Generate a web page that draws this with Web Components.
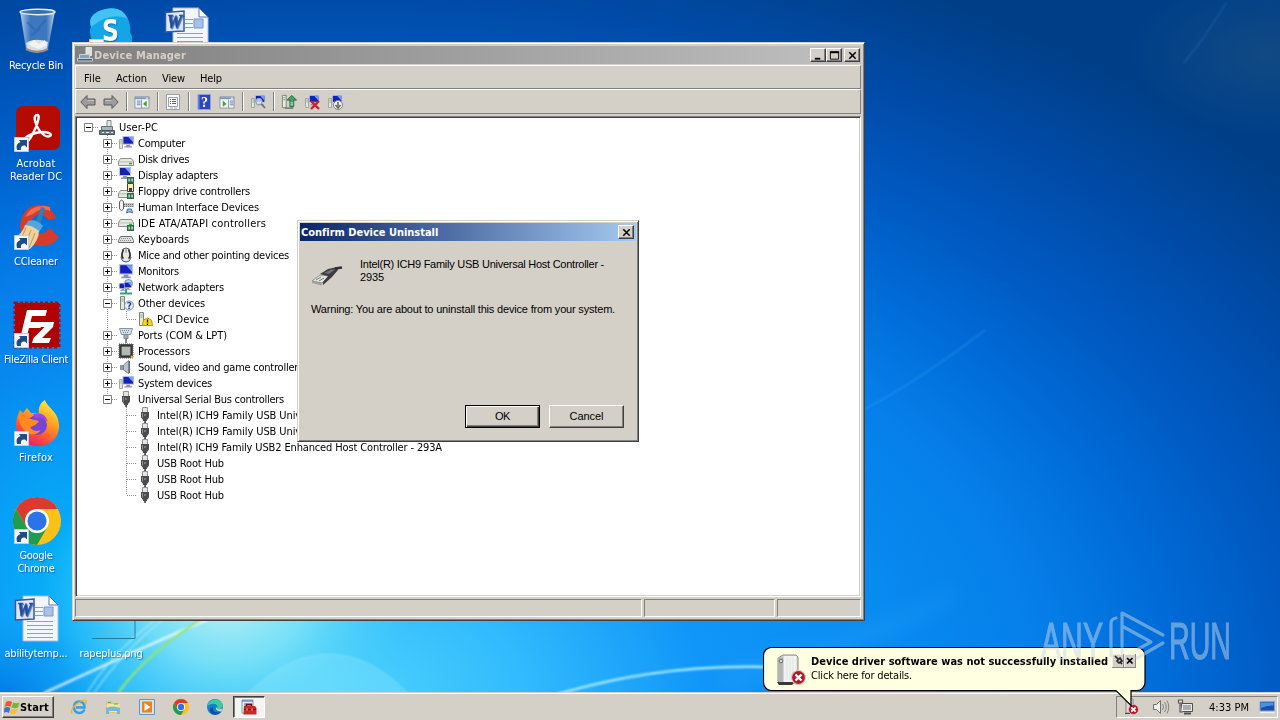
<!DOCTYPE html>
<html lang="en">
<head>
<meta charset="utf-8">
<title>Device Manager</title>
<style>
    html, body { margin: 0; height: 100%; overflow: hidden; }
    body { font: 11px/13px "DejaVu Sans Condensed", "DejaVu Sans", sans-serif; color: #000; }
</style>
</head>
<body>
<desktop-screen>
    <desktop-icon icon="bin" col="1" row="1" width="54">Recycle Bin</desktop-icon>
    <desktop-icon icon="acrobat" col="1" row="2" width="39" shortcut>Acrobat<span slot="second"><fit-text width="52">Reader DC</fit-text></span></desktop-icon>
    <desktop-icon icon="ccleaner" col="1" row="3" width="44" shortcut>CCleaner</desktop-icon>
    <desktop-icon icon="filezilla" col="1" row="4" width="64" shortcut>FileZilla Client</desktop-icon>
    <desktop-icon icon="firefox" col="1" row="5" width="34" shortcut>Firefox</desktop-icon>
    <desktop-icon icon="chrome" col="1" row="6" width="33" shortcut>Google<span slot="second"><fit-text width="37">Chrome</fit-text></span></desktop-icon>
    <desktop-icon icon="word" col="1" row="7" width="63">abilitytemp...</desktop-icon>
    <desktop-icon icon="skype" col="2" row="1" shortcut></desktop-icon>
    <desktop-icon icon="thumb" col="2" row="7" width="63">rapeplus.png</desktop-icon>
    <desktop-icon icon="word" col="3" row="1"></desktop-icon>

    <device-manager slot="window">
        <tree-row level="0" box="-" icon="pc" width="39">User-PC</tree-row>
        <tree-row level="1" box="+" icon="computer" width="47">Computer</tree-row>
        <tree-row level="1" box="+" icon="disk" width="51">Disk drives</tree-row>
        <tree-row level="1" box="+" icon="display" width="80">Display adapters</tree-row>
        <tree-row level="1" box="+" icon="floppy" width="112">Floppy drive controllers</tree-row>
        <tree-row level="1" box="+" icon="hid" width="121">Human Interface Devices</tree-row>
        <tree-row level="1" box="+" icon="ide" width="128">IDE ATA/ATAPI controllers</tree-row>
        <tree-row level="1" box="+" icon="keyboard" width="51">Keyboards</tree-row>
        <tree-row level="1" box="+" icon="mouse" width="151">Mice and other pointing devices</tree-row>
        <tree-row level="1" box="+" icon="monitor" width="41">Monitors</tree-row>
        <tree-row level="1" box="+" icon="network" width="86">Network adapters</tree-row>
        <tree-row level="1" box="-" icon="other" width="67">Other devices</tree-row>
        <tree-row level="2" last icon="warn" width="52">PCI Device</tree-row>
        <tree-row level="1" box="+" icon="port" width="89">Ports (COM &amp; LPT)</tree-row>
        <tree-row level="1" box="+" icon="cpu" width="52">Processors</tree-row>
        <tree-row level="1" box="+" icon="sound" width="165">Sound, video and game controllers</tree-row>
        <tree-row level="1" box="+" icon="computer" width="74">System devices</tree-row>
        <tree-row level="1" last box="-" icon="usb" width="146">Universal Serial Bus controllers</tree-row>
        <tree-row level="2" closed icon="usb" width="278">Intel(R) ICH9 Family USB Universal Host Controller - 2934</tree-row>
        <tree-row level="2" closed icon="usb" width="278">Intel(R) ICH9 Family USB Universal Host Controller - 2935</tree-row>
        <tree-row level="2" closed icon="usb" width="285">Intel(R) ICH9 Family USB2 Enhanced Host Controller - 293A</tree-row>
        <tree-row level="2" closed icon="usb" width="67">USB Root Hub</tree-row>
        <tree-row level="2" closed icon="usb" width="67">USB Root Hub</tree-row>
        <tree-row level="2" closed last icon="usb" width="67">USB Root Hub</tree-row>
    </device-manager>

    <confirm-dialog slot="window">
        <span slot="title"><fit-text width="137">Confirm Device Uninstall</fit-text></span>
        <fit-text slot="device" width="244">Intel(R) ICH9 Family USB Universal Host Controller -</fit-text>
        <fit-text slot="device" width="24">2935</fit-text>
        <fit-text slot="message" width="304">Warning: You are about to uninstall this device from your system.</fit-text>
    </confirm-dialog>

    <task-bar slot="bar"></task-bar>
    <tray-balloon slot="window">
        <fit-text slot="title" width="297">Device driver software was not successfully installed</fit-text>
        <fit-text width="101">Click here for details.</fit-text>
    </tray-balloon>
    <water-mark slot="window"></water-mark>
</desktop-screen>

<script>
const monitorShape = (x, y, s) => `<g transform="translate(${x} ${y}) scale(${s})"><path d="M0 0h12v9H0z" fill="#b8c4e4"/><path d="M1 1h10v7H1z" fill="#1420b8"/><path d="M6 1h5v5.500z" fill="#7c9cf4"/><path d="M4 9h4v1.600h2V12H2v-1.400h2z" fill="#8a94ac"/></g>`;
const towerShape = '<path d="M1.500 4.500h3v9h-3z" fill="#e4e8e0" stroke="#a0a8a0"/><path d="M2.500 6h1.200M2.500 8h1.200" stroke="#58a058"/>';
const driveShape = (y) => `<path d="M2.500 ${y}h11l2 3v4H.5v-4z" fill="#e6e8e4" stroke="#8c908c"/><path d="M1 ${y + 3.4}h14" stroke="#b8bcb8"/><path d="M11 ${y + 5}h3" stroke="#34a040" stroke-width="1.500"/>`;
const chipBadge = '<path d="M9 10h7v6H9z" fill="#2c6844"/><path d="M10.300 11.500h1.800v3h-1.800zM13.200 11.500H15v3h-1.800z" fill="#a8d0b0"/>';
const panelShape = '<path d="M1 3h15v12H1z" fill="#f4f6fa" stroke="#8894a8"/><path d="M1 3.500h15v2H1z" fill="#7c96b8"/><path d="M12.500 4.400h2.500" stroke="#fff"/>';
const redCross = '<circle r="7" fill="#b01c28" stroke="#d8c8c8" stroke-width="1.200"/><path d="M-3-3 3 3M3-3-3 3" stroke="#fff" stroke-width="2.400"/>';
const folds = '<path d="M10 1h26l9 9v36H10z" fill="#f2f7ff" stroke="#a9bbdd"/><path d="M36 1v9h9z" fill="#fff" stroke="#4c74b4"/><path d="M22 12.500h8M22 16.500h8M22 20.500h8M14 26.500h26M14 30.500h26M14 34.500h26M14 38.500h26M14 42.500h26" stroke="#86a0d4"/><path d="M31 12h9v9h-9z" fill="#a9c0e8" stroke="#7696cc"/>';

// name: [viewBox size, svg markup]
const ICONS = {
    bin: [48, '<defs><linearGradient id="g"><stop stop-color="#d8e8f4" stop-opacity=".85"/><stop offset=".3" stop-color="#5c90cc" stop-opacity=".65"/><stop offset=".75" stop-color="#6e9ad0" stop-opacity=".55"/><stop offset="1" stop-color="#dce8f0" stop-opacity=".9"/></linearGradient></defs><path d="M7 4 13 42q11 6 22 0L42 4z" fill="url(#g)"/><path d="M13 36q9-6 22-1l-1 7q-10 6-20 0z" fill="#d8dde2"/><path d="m15 37 6-4 5 4 6-4 2 5-8 4-6-2z" fill="#f4f2ee"/><path d="m14 15 9 9 10-11M18 29l9-7" stroke="#2c62b0" stroke-width="2" fill="none" opacity=".6"/><ellipse cx="24.500" cy="5" rx="17.500" ry="2.700" fill="#3f6ca4" fill-opacity=".7" stroke="#e4eef4" stroke-width="1.400"/><path d="M13 42q11 6 22 0" stroke="#968b88" stroke-width="2.500" fill="none"/>'],
    acrobat: [48, '<rect x="3" y="1" width="44" height="44" rx="7" fill="#b30b00"/><path d="M24.500 10c-5 0-2.500 8 1 14 3 5 8 9 11.500 7s-3-5-12-3.500S10 33 12 36c3 3 8-7 11-14 2-5 4-12 1.500-12z" fill="none" stroke="#fff" stroke-width="2.400"/>'],
    ccleaner: [48, '<path d="M44 15 35 3Q18-2 10 12 2 29 16 39q13 8 26 0l4-5-9-9q-9 10-16 2-6-9 1-14 8-4 13 4z" fill="#d63c2c"/><path d="M37 4Q19 0 12 14l8-3q8-7 17-3z" fill="#ef6c4c"/><path d="m28 4 4 1-6 20-5-1z" fill="#2d7fbd"/><path d="M15 18q8-3 15 5l-4 6q-7-5-14-6z" fill="#51a7dd"/><path d="M12 22q7 0 14 6 0 9-9 18Q6 46 2 34q7-3 10-12z" fill="#efd19a"/><path d="m13 25-6 13m11-11-6 16m10-13-6 15" stroke="#c79954"/>'],
    filezilla: [48, '<path d="M2 2h44v44H2z" fill="#b00000" stroke="#a80c10" stroke-width="3" stroke-dasharray="3 2"/><path d="M14 9h20l-1.500 6H19l-1.500 6H29l-1.500 6H16l-4 15H6z" fill="#fff"/><path d="M25 21h16l-1 5-11 11h9l-2 5H19l1.500-5 11-11h-8z" fill="#fff"/>'],
    firefox: [48, '<defs><linearGradient id="g" x1=".8" y1="0" x2=".3" y2="1"><stop stop-color="#fff44a"/><stop offset=".4" stop-color="#ffa21f"/><stop offset=".75" stop-color="#ff4a40"/><stop offset="1" stop-color="#e02070"/></linearGradient></defs><path d="M32 1c2 8 14 11 14 26 0 12-9 20-21 20S3 38 3 25c0-5 2-10 4-14l3 3 4-5 4 5h8c-1-5 1-10 6-13z" fill="url(#g)"/><circle cx="24" cy="26" r="10" fill="#7844d4"/><path d="M6 13q4 7 12 7l8 2q-3 5-9 6 4 6 11 3-7 8-15 2Q4 25 6 13z" fill="#ff8b1c"/><path d="M20 15q12-3 15 8-7-7-12-3z" fill="#9a48e0"/>'],
    chrome: [48, '<circle cx="24" cy="24" r="24" fill="#fbc116"/><path d="M24 12h20.800A24 24 0 0 0 3.200 12L13.600 30z" fill="#db3b2e"/><path d="M3.200 12 13.600 30 24 36l10.400-6L24 48A24 24 0 0 1 3.200 12z" fill="#249a4c"/><circle cx="24" cy="24" r="12" fill="#fff"/><circle cx="24" cy="24" r="9.600" fill="#2c72e8"/>'],
    word: [48, folds + '<path d="M2.500 5.500 21 4v20L2.500 25z" fill="#dfe8fa" stroke="#305aa8" stroke-width="1.500"/><text x="4" y="21" font-family="Liberation Serif, serif" font-size="18" font-weight="700" font-style="italic" fill="#2a52a0" stroke="#2a52a0" stroke-width=".6" textLength="15" lengthAdjust="spacingAndGlyphs">W</text>'],
    skype: [48, '<path d="M14 3q19-6 26 9 3 7 2 13 5 8-1 15-7 7-16 4Q8 46 3 31q-2-8 0-11Q-1 8 14 3z" fill="#12a5e8"/><path d="M14 3q19-6 26 9-17-8-37 8Q-1 8 14 3z" fill="#42c3f4"/><text x="22.500" y="34" text-anchor="middle" font-family="DejaVu Sans, sans-serif" font-weight="700" font-size="30" fill="#fff" textLength="17" lengthAdjust="spacingAndGlyphs">S</text>'],
    thumb: [48, '<path d="M4 43.500h43V20" fill="none" stroke="#247d98"/><path d="M19 37h7" stroke="#70b8c8"/>'],
    pc: [16, '<path d="M8 1.500h4v7H8z" fill="#e4ece4" stroke="#808880"/><path d="M2.500 7.500h11v4h-11z" fill="#a8b4bc" stroke="#68747c"/><path d="M.5 11.500h15v4H.5z" fill="#6c7c84" stroke="#48545c"/><path d="M3 13.500h2m2 0h3m2 0h2" stroke="#dce8ec"/>'],
    computer: [16, towerShape + monitorShape(4.5, 1, .96)],
    disk: [16, driveShape(7.5)],
    display: [16, monitorShape(1, 0, 1) + chipBadge],
    floppy: [16, driveShape(7.5) + '<path d="M9.500.5h6v8h-6z" fill="#f4eeb0" stroke="#404038"/><path d="M11 5h3v3h-3z" fill="#404038"/>' + chipBadge],
    hid: [16, '<path d="M1.500 3q2-4 4 0v7q-2 3-4 0z" fill="#f0f0f0" stroke="#606060"/><path d="M6 4h10v4H6z" fill="#c0c0c0"/><path d="M6 5.500h10M6 7.500h10" stroke="#707070" stroke-dasharray="1 1"/><path d="m8.500 14 1-4h4l1 4-2-1h-2z" fill="#a4c0dc" stroke="#486c98"/>'],
    ide: [16, driveShape(4.5) + chipBadge],
    keyboard: [16, '<path d="M2.500 5.500h11l2 4v2H.5v-2z" fill="#e0e0e0" stroke="#707070"/><path d="M3 7.500h10M2 9.500h12" stroke="#909090" stroke-dasharray="1 1"/>'],
    mouse: [16, '<path d="M5 2q3-2 6 0l2 9q-1 4-5 4t-5-4z" fill="#e8e8e8" stroke="#585858"/><path d="M5.500 2.500q-3 7 0 9M10.500 2.500q3 7 0 9" stroke="#303030" stroke-width="1.600" fill="none"/><path d="M8 2v4" stroke="#888"/>'],
    monitor: [16, monitorShape(1, 1, 1.18)],
    network: [16, '<circle cx="10.500" cy="4.500" r="4" fill="#b4d4f4" stroke="#6890c8"/>' + monitorShape(1, 4, .65) + monitorShape(6, 3, .65) + '<path d="M8 10v4M2 14.500h12" stroke="#34a078" stroke-width="2"/>'],
    other: [16, '<path d="M2.500 1.500h4v13h-4z" fill="#e6eae2" stroke="#7c847c"/><path d="M3.500 4h2M3.500 6h2" stroke="#70a070"/><circle cx="11" cy="10.500" r="4.500" fill="#e8f0fc" stroke="#7890b8"/><text x="8.800" y="14" font-family="DejaVu Sans, sans-serif" font-size="9" font-weight="700" fill="#2840a8">?</text>'],
    warn: [16, '<path d="M2.500 1.500h4v13h-4z" fill="#e6eae2" stroke="#7c847c"/><path d="M3.500 4h2M3.500 6h2" stroke="#70a070"/><path d="m10.500 7 4 2 1 5.500h-10L6.500 9z" fill="#f4d818" stroke="#b89808"/><path d="M10.500 8.500v3m0 1v1.500" stroke="#201800" stroke-width="1.300"/>'],
    port: [16, '<path d="M1.500 1.500h13l-2 6h-9z" fill="#d4e0e8" stroke="#8494a8"/><path d="M4 3.500h8M5 5.500h6" stroke="#708098" stroke-dasharray="1 1"/><path d="M6 7.500h4v4H6z" fill="#a0acb4" stroke="#7c8890"/><path d="M8 11v5" stroke="#808c94" stroke-width="2"/>'],
    cpu: [16, '<path d="M1 1h14v14H1z" fill="#505050" stroke="#505050" stroke-dasharray="1 1"/><path d="M3 3h10v10H3z" fill="#b4b8b4" stroke="#1c1c1c"/><path d="m13 13 2 2" stroke="#d8c040" stroke-width="2"/>'],
    sound: [16, '<path d="M2 6h3.500v5H2z" fill="#8898a8"/><path d="m5.500 6 5-4.500v13l-5-3.500z" fill="#b8c4cc" stroke="#788490"/><path d="M11.500 2v12" stroke="#647080"/>'],
    usb: [16, '<path d="M5.500.5h5v5h-5z" fill="#e4e4e4" stroke="#909090"/><path d="M4 5h8v5.500L10 13v1H9v2H7.200v-2H6v-1l-2-2.500z" fill="#4c4c50"/><path d="M5.500 6v4.500" stroke="#909094"/><path d="M7 8h2" stroke="#a4a4a4"/>'],
    title: [16, '<path d="M9 .5h5.500v8H9z" fill="#dce4dc" stroke="#e4e8e4"/><path d="M2.500 7.500h10v4h-10z" fill="#8ca0b0" stroke="#c8d4dc"/><path d="M.5 11.500h15v2.500H.5z" fill="#486070" stroke="#c4d0d8"/>'],
    back: [16, '<path d="M.8 8 7 1.500V5h8v6H7v3.500z" fill="#9c9c9c" stroke="#585858"/><path d="M7.500 6.500H14" stroke="#c4c4c4"/>'],
    forward: [16, '<path d="M15.200 8 9 1.500V5H1v6h8v3.500z" fill="#9c9c9c" stroke="#585858"/><path d="M8.500 6.500H2" stroke="#c4c4c4"/>'],
    showtree: [17, panelShape + '<path d="M3 7.500h4M3 9.500h4M3 11.500h4" stroke="#5c7ca4"/><path d="M8 6v9" stroke="#8894a8"/><path d="m13.500 7-4 3.500 4 3z" fill="#40a430"/>'],
    props: [16, '<path d="M1.500.5h13v15h-13z" fill="#f6f8fa" stroke="#98a0ac"/><path d="M3.500 3.500h9v9h-9z" fill="#fff" stroke="#90a4bc"/><path d="M5 5.500h1m1 0h4M5 7.500h1m1 0h4M5 9.500h1m1 0h4" stroke="#4c6484"/><path d="M5 14h3m1 0h3" stroke="#a8b0b8"/>'],
    help: [16, '<path d="M2 .5h12.500v15H2z" fill="#2d49b8" stroke="#8ca0e0"/><path d="M3 1v14" stroke="#6c88e4"/><text x="5" y="13" font-family="Liberation Serif, serif" font-weight="700" font-size="14" fill="#fff">?</text>'],
    console: [17, panelShape + '<path d="M11.500 7.500h4M11.500 9.500h4M11.500 11.500h4" stroke="#5c7ca4"/><path d="M10 6v9" stroke="#8894a8"/><path d="m4 7 4 3.500-4 3z" fill="#40a430"/>'],
    scan: [16, towerShape + monitorShape(5, 1, .85) + '<circle cx="9" cy="7.500" r="3.200" fill="#dceaf8" fill-opacity=".8" stroke="#90a0b8"/><path d="m11.500 10 3.500 4" stroke="#687080" stroke-width="1.800"/>'],
    update: [17, '<path d="M1.500 1.500h4v13h-4z" fill="#e6eae2" stroke="#7c847c"/><path d="M2.500 4h2M2.500 6h2" stroke="#70a070"/><path d="M4 15h9" stroke="#687468" stroke-width="1.500"/><path d="m11.500 1.500 5 5h-3v7h-4v-7h-3z" fill="#48a068" stroke="#206838"/><path d="M10 9.500h3M10 11.500h3" stroke="#c8ecd0"/>'],
    remove: [16, towerShape + monitorShape(5, 1, .85) + '<path d="m7 7 8 8M15 7l-8 8" stroke="#d41c1c" stroke-width="2.300"/>'],
    disable: [16, towerShape + monitorShape(5, 1, .85) + '<circle cx="11" cy="11" r="4.500" fill="#f4f4f4" stroke="#808080"/><path d="M11 8v4m-2.500-1 2.500 3 2.500-3" fill="none" stroke="#606060" stroke-width="1.500"/>'],
    plug: [32, '<path d="m1 21 8-6 10 1-8 7z" fill="#e4e4e0" stroke="#8c8c88"/><path d="m5 20 5-3m-2 4 5-3" stroke="#78786c"/><path d="m1 21 10 2v2.500L1 23z" fill="#a0a09c"/><path d="m9 14 8-5 9-2 1 3-6 7-9 8v-3l5-6z" fill="#3c3c40"/><path d="m13 13 7-3.500h4L18 14z" fill="#707074"/><path d="m24 8.500 7-1" stroke="#303034" stroke-width="2.600"/>'],
    flag: [16, '<path d="M2 3q3-2 6 0L6.500 8q-3-2-6 0z" fill="#ea5b20"/><path d="M9 3.500q3 1.500 6.500 0L14 8.500q-3.500 1.500-6.500 0z" fill="#72b830"/><path d="M.3 9q3-2 6 0L5 14q-3-2-5 0z" fill="#3478d0"/><path d="M7.200 9.500q3 1.500 6.500 0L12.300 14q-3.500 2-6.500 0z" fill="#fac028"/>'],
    ie: [16, '<path d="M13.500 10.500Q12 14 8 14q-5-.5-5-6t5.500-5.500q5 .5 5 6H5" fill="none" stroke="#35a0e4" stroke-width="2.400"/><path d="M1 14.500Q-1 11 5 5.500 13-.5 15 1.500q1 1-1 4" fill="none" stroke="#e4b430" stroke-width="1.300"/>'],
    explorer: [16, '<path d="M1 2h6l1 2h6v10H1z" fill="#e8c860"/><path d="M2 5h12.500v8H2z" fill="#f8e49c"/><path d="M1 9q7-3 14 0v6h-3v-3H4v3H1z" fill="#74b8dc"/><path d="M3 3.500h3M9 5h4" stroke="#58a868"/>'],
    player: [16, '<path d="M.5.5h15v15H.5z" fill="#d0e4f4" stroke="#5c98cc"/><path d="M3 2.500h10v11H3z" fill="#f08018"/><path d="m5.500 4 6 4-6 4z" fill="#fff"/>'],
    edge: [16, '<circle cx="8" cy="8" r="8" fill="#1580cc"/><path d="M.5 7C2-1 14-2 15.800 6c.5 3-3 5-5.500 3.500C12 5 5 3 .5 7z" fill="#3ccc9c"/><path d="M6 8q-1 7 8 5-4 4-9 2-5-5 1-7z" fill="#0c509c"/><path d="M9 8q-1 4 5 4.500 2-1 1.500-3-3 1.500-5.200 0z" fill="#d4d0c8"/>'],
    mmc: [16, '<path d="M1 1h11v13H1z" fill="#e4ecf4" stroke="#8098b8"/><path d="M1 2h11M3 5h8M3 7h8" stroke="#4c6c9c"/><path d="M5.500 7V5.500h5V7" fill="none" stroke="#601010" stroke-width="1.400"/><path d="M3 7h11l1.500 2v6.500h-13z" fill="#c42828"/><path d="M3 10.500h12" stroke="#7c1010"/><path d="M6 9.500v2m5-2v2" stroke="#f4d8d8"/>'],
    traydev: [16, '<path d="M3 0h7v14H3z" fill="#dcdcdc" stroke="#888"/><path d="M2 14.500h8" stroke="#444"/><g transform="translate(10.500 10.500) scale(.72)">' + redCross + '</g>'],
    volume: [16, '<path d="M.5 5.500h3l4-4v13l-4-4h-3z" fill="#f0f0ec" stroke="#707070"/><path d="M9.500 5q2 3 0 6M11.500 3q3.500 5 0 10M14 1.500q3.500 6.500 0 13" fill="none" stroke="#848484"/>'],
    traynet: [16, '<path d="M4.500 4.500h11v8h-11z" fill="#acacac" stroke="#505050"/><path d="M5.500 5.500h9v6h-9z" fill="none" stroke="#eee"/><path d="M7 14.500h7" stroke="#505050" stroke-width="2"/><path d="M1.500 1h4v3h-4zM3 4v9h3" fill="#eee" fill-opacity=".6" stroke="#585858" stroke-width="1.200"/>'],
    showdesk: [16, '<path d="M1 2.500h14.500v9.500H1z" fill="#1c50a8" stroke="#7ca8e0"/><path d="M2 3.500h12.500v3Q8 6 2 9z" fill="#4c90e4"/><path d="M1 13.500h14.500" stroke="#e8f0f8" stroke-width="1.400"/>'],
    failed: [32, '<path d="M3 4 8 1h13l2 2v26H6l-3-2z" fill="#d4d4d0" stroke="#8c8c88"/><path d="M9 2h12.500v26H9z" fill="#f2f2f0"/><path d="M12 4v22m3-22v22m3-22v22" stroke="#e0e4e4"/><path d="M3 4v23l5 1V3z" fill="#b4b6b4"/><circle cx="6" cy="7" r="1.800" fill="#e0e0e0" stroke="#686868"/><path d="M2 28h18l-3 3H4z" fill="#343c38"/><g transform="translate(23.500 23.500)">' + redCross + '</g>'],
    pin: [12, '<path d="m3 2 3 3m-1 2 3-3 2 3-3 2zM8 8l2 2" stroke="#282828" stroke-width="1.700" fill="none"/>'],
    cross: [12, '<path d="m3 4 5.500 5.500M8.500 4 3 9.500" stroke="#000" stroke-width="1.700"/>'],
    min: [12, '<path d="M2 9.500h6" stroke="#000" stroke-width="2"/>'],
    max: [12, '<path d="M1.500 2v8h9V2z" fill="none" stroke="#000"/><path d="M1 2.500h10" stroke="#000" stroke-width="2"/>'],
    close: [12, '<path d="m2.500 2.500 7 7m0-7-7 7" stroke="#000" stroke-width="1.700"/>'],
    shortcut: [16, '<path d="M.5.5h14v14H.5z" fill="#f4f8fc" stroke="#c0ccd8"/><path d="M3 13Q1 7 6.500 5L5 3h8v7.500L11 8.500Q6 8 7 13z" fill="#1c4c8c"/>'],
};

class UiIcon extends HTMLElement {
    connectedCallback() {
        if (this.shadowRoot) return;
        const [box, markup] = ICONS[this.getAttribute('name')];
        const size = this.getAttribute('size') || box;
        this.attachShadow({ mode: 'open' }).innerHTML = `
            <style>
                :host { display: block; flex: none; width: ${size}px; height: ${size}px; }
                svg { display: block; overflow: visible; }
            </style>
            <svg width="${size}" height="${size}" viewBox="0 0 ${box} ${box}">${markup}</svg>
        `;
    }
}

// One line of text, spaced out or in to a given width
class FitText extends HTMLElement {
    connectedCallback() {
        if (this.shadowRoot) return;
        this.attachShadow({ mode: 'open' }).innerHTML = `
            <style>:host { display: block; white-space: nowrap; } span { display: inline-block; }</style>
            <span><slot></slot></span>
        `;
        const span = this.shadowRoot.querySelector('span');
        const width = parseFloat(this.getAttribute('width'));
        const count = this.textContent.length;
        const natural = span.getBoundingClientRect().width;
        if (width && natural) span.style.letterSpacing = `${(width - natural) / count}px`;
    }
}

class DesktopScreen extends HTMLElement {
    constructor() {
        super();
        this.attachShadow({ mode: 'open' }).innerHTML = `
            <style>
                :host { display: flex; flex-direction: column; position: relative; width: 1280px; height: 720px; overflow: hidden; background: #0058bc; }
                .wallpaper { position: absolute; inset: 0; }
                .icons { position: relative; flex: 1; min-height: 0; margin-left: -1px; display: grid; grid-template-columns: repeat(3, 75px); grid-template-rows: repeat(7, 98px); }
            </style>
            <svg class="wallpaper" width="1280" height="720">
                <defs>
                    <radialGradient id="sky" gradientUnits="userSpaceOnUse" cx="0" cy="0" r="1" gradientTransform="translate(330 700) scale(1250 800)">
                        <stop offset="0" stop-color="#50d4fb"/><stop offset=".15" stop-color="#33bcfd"/>
                        <stop offset=".3" stop-color="#1096f8"/><stop offset=".44" stop-color="#088cf0"/>
                        <stop offset=".57" stop-color="#067fea"/><stop offset=".67" stop-color="#006cd8"/>
                        <stop offset=".76" stop-color="#005bc4"/><stop offset=".88" stop-color="#004ba8"/>
                        <stop offset="1" stop-color="#003f88"/>
                    </radialGradient>
                    <radialGradient id="glow"><stop stop-color="#c4f2f4"/><stop offset=".45" stop-color="#84e6f6" stop-opacity=".8"/><stop offset="1" stop-color="#40d0fa" stop-opacity="0"/></radialGradient>
                    <radialGradient id="teal"><stop stop-color="#00b4f8" stop-opacity=".8"/><stop offset="1" stop-color="#00b0f8" stop-opacity="0"/></radialGradient>
                    <radialGradient id="corner"><stop stop-color="#0078e4"/><stop offset="1" stop-color="#0090f0" stop-opacity="0"/></radialGradient>
                    <radialGradient id="haze"><stop stop-color="#1c5080" stop-opacity=".6"/><stop offset="1" stop-color="#1c5080" stop-opacity="0"/></radialGradient>
                    <filter id="soft" x="-20%" y="-20%" width="140%" height="140%"><feGaussianBlur stdDeviation=".9"/></filter>
                    <filter id="wide" x="-20%" y="-50%" width="140%" height="200%"><feGaussianBlur stdDeviation="9"/></filter>
                </defs>
                <rect width="1280" height="720" fill="url(#sky)"/>
                <ellipse cx="70" cy="560" rx="150" ry="200" fill="url(#teal)"/>
                <ellipse cx="225" cy="595" rx="185" ry="150" fill="url(#glow)"/>
                <ellipse cx="0" cy="700" rx="110" ry="90" fill="url(#corner)"/>
                <ellipse cx="1270" cy="55" rx="140" ry="80" fill="url(#haze)"/>
                <path d="M720 665Q840 640 960 585L950 605Q850 660 720 690z" fill="#3caaff" opacity=".18" filter="url(#wide)"/>
                <g fill="none" filter="url(#soft)">
                    <path d="M44 693Q120 658 190 627T260 590" stroke="#fff" stroke-opacity=".7" stroke-width="3"/>
                    <path d="M118 693Q150 650 205 617" stroke="#90e474" stroke-width="2.500"/>
                    <path d="M87 693Q110 655 155 620M94 693Q122 652 165 618" stroke="#b4f0fc" stroke-width="1.200" opacity=".8"/>
                    <path d="M558 694Q660 664 765 667" stroke="#a4e8ff" stroke-width="2.500"/>
                    <path d="M247 694Q330 614 409 694z" fill="#a4f0ff" fill-opacity=".25" stroke="#a4f0ff" stroke-opacity=".4"/>
                    <path d="M865 409Q920 380 985 330" stroke="#4ca8f4" stroke-width="1.300" opacity=".45"/>
                    <path d="M1184 63l18-23M1202 40l25-38" stroke="#4ca8f4" stroke-width="1.300" opacity=".25"/>
                </g>
            </svg>
            <div class="icons"><slot></slot></div>
            <slot name="window"></slot>
            <slot name="bar"></slot>
        `;
    }
}

class DesktopIcon extends HTMLElement {
    connectedCallback() {
        if (this.shadowRoot) return;
        const width = this.getAttribute('width');
        this.attachShadow({ mode: 'open' }).innerHTML = `
            <style>
                :host { grid-column: ${this.getAttribute('col')}; grid-row: ${this.getAttribute('row')}; display: flex; flex-direction: column; align-items: center; gap: 4px; padding-top: 7px; color: #fff; text-shadow: 1px 1px 1px rgba(0, 56, 140, .6); }
                .picture { position: relative; }
                .arrow { position: absolute; left: 1px; bottom: 0; }
                .label { display: flex; flex-direction: column; align-items: center; margin-left: -1px; }
            </style>
            <div class="picture">
                <ui-icon name="${this.getAttribute('icon')}"></ui-icon>
                ${this.hasAttribute('shortcut') ? '<ui-icon class="arrow" name="shortcut"></ui-icon>' : ''}
            </div>
            <div class="label">
                ${width ? `<fit-text width="${width}">${this.firstChild.textContent}</fit-text>` : ''}
                <slot name="second"></slot>
            </div>
        `;
    }
}

const buttonFace = `
    background: #d4d0c8; box-sizing: border-box;
    border: 1px solid; border-color: #fff #404040 #404040 #fff;
    box-shadow: inset -1px -1px #808080;
`;

const frame = `
    box-sizing: border-box; background: #d4d0c8;
    border: 1px solid; border-color: #d4d0c8 #404040 #404040 #d4d0c8;
    box-shadow: inset 1px 1px #fff, inset -1px -1px #808080;
`;

class CaptionButton extends HTMLElement {
    constructor() {
        super();
        this.attachShadow({ mode: 'open' }).innerHTML = `
            <style>
                :host { display: flex; width: 16px; height: 14px; align-items: center; justify-content: center; ${buttonFace} }
            </style>
            <ui-icon name="${this.getAttribute('name')}" size="11"></ui-icon>
        `;
    }
}

class TreeRow extends HTMLElement {
    connectedCallback() {
        if (this.shadowRoot) return;
        const level = Number(this.getAttribute('level'));
        const box = this.getAttribute('box');
        const last = this.hasAttribute('last');
        const cells = [];
        for (let i = 0; i < level; i++) {
            cells.push(`<i class="${i === 1 && !this.hasAttribute('closed') ? 'down' : ''}"></i>`);
        }
        const stem = level === 0 ? '' : last ? 'half' : 'down';
        cells.push(`<i class="${stem}"><b></b>${box ? `<svg width="9" height="9"><path d="M.5.5h8v8h-8z" fill="#fff" stroke="#808080"/><path d="M2 4.500h5${box === '+' ? 'M4.500 2v5' : ''}" stroke="#000"/></svg>` : ''}</i>`);
        this.attachShadow({ mode: 'open' }).innerHTML = `
            <style>
                :host { display: flex; align-items: center; height: 16px; }
                i { position: relative; flex: none; display: flex; align-items: center; justify-content: center; width: 19px; height: 16px; background: repeating-linear-gradient(#8c8c8c 0 1px, transparent 1px 2px) 9px 0 / 1px 0 no-repeat; }
                .down { background-size: 1px 16px; }
                .half { background-size: 1px 8px; }
                b { position: absolute; left: 10px; right: 0; top: 8px; height: 1px; background: repeating-linear-gradient(90deg, #8c8c8c 0 1px, transparent 1px 2px); }
                svg { position: relative; }
                ui-icon { margin: 0 4px 0 1px; }
            </style>
            ${cells.join('')}
            <ui-icon name="${this.getAttribute('icon')}" size="16"></ui-icon>
            <fit-text width="${this.getAttribute('width')}">${this.innerHTML}</fit-text>
        `;
    }
}

class DeviceManager extends HTMLElement {
    constructor() {
        super();
        const tools = ['back', 'forward', '|', 'showtree', '|', 'props', '|', 'help', 'console', '|', 'scan', '|', 'update', 'remove', 'disable'];
        this.attachShadow({ mode: 'open' }).innerHTML = `
            <style>
                :host { position: absolute; left: 72px; top: 42px; width: 793px; height: 579px; padding: 3px 3px 3px 2px; display: flex; flex-direction: column; ${frame} }
                .title { flex: none; display: flex; align-items: center; height: 18px; margin-bottom: 1px; padding: 0 1px 0 2px; gap: 1px; background: linear-gradient(90deg, #808080, #c0c0c0); color: #d4d0c8; font-weight: 700; }
                .buttons { display: flex; margin-left: auto; }
                .buttons :last-child { margin-left: 2px; }
                .bar { flex: none; box-sizing: border-box; display: flex; align-items: center; height: 25px; border: 1px solid; border-color: #fff #808080 #808080 #fff; }
                .menu { height: 24px; padding: 2px 0 0 8px; gap: 15px; }
                .tools { padding-left: 4px; gap: 7px; }
                .tools u { width: 1px; height: 19px; background: #808080; border-right: 1px solid #fff; margin-right: -1px; }
                .tree { flex: 1; min-height: 0; margin: 2px 0 2px; padding: 2px 0 0 3px; background: #fff; border: 1px solid; border-color: #808080 #fff #fff #808080; box-shadow: inset 1px 1px #404040, inset -1px -1px #d4d0c8; overflow: hidden; }
                .status { flex: none; display: flex; gap: 2px; height: 18px; }
                .status span { box-sizing: border-box; border: 1px solid; border-color: #808080 #fff #fff #808080; }
                .status span:nth-child(1) { flex: 1; }
                .status span:nth-child(2) { width: 131px; }
                .status span:nth-child(3) { width: 84px; }
            </style>
            <div class="title">
                <ui-icon name="title"></ui-icon><fit-text width="92">Device Manager</fit-text>
                <div class="buttons">
                    <caption-button name="min"></caption-button><caption-button name="max"></caption-button><caption-button name="close"></caption-button>
                </div>
            </div>
            <div class="bar menu">
                <fit-text width="17">File</fit-text><fit-text width="31">Action</fit-text><fit-text width="23">View</fit-text><fit-text width="22">Help</fit-text>
            </div>
            <div class="bar tools">${tools.map((t) => t === '|' ? '<u></u>' : `<ui-icon name="${t}" size="16"></ui-icon>`).join('')}</div>
            <div class="tree"><slot></slot></div>
            <div class="status"><span></span><span></span><span></span></div>
        `;
    }
}

class ConfirmDialog extends HTMLElement {
    constructor() {
        super();
        this.attachShadow({ mode: 'open' }).innerHTML = `
            <style>
                :host { position: absolute; left: 297px; top: 220px; width: 342px; height: 222px; padding: 2px; display: flex; flex-direction: column; ${frame} }
                .title { display: flex; align-items: center; justify-content: space-between; height: 18px; padding: 0 2px 0 1px; background: linear-gradient(90deg, #0a246a, #a6caf0); color: #fff; font-weight: 700; }
                .body { flex: 1; display: flex; flex-direction: column; padding: 17px 12px 11px 11px; font: 11px/13px "Liberation Sans", Arial, sans-serif; }
                .device { display: flex; gap: 17px; height: 45px; }
                .device ui-icon { margin-top: 2px; }
                .buttons { display: flex; justify-content: flex-end; gap: 9px; margin-top: auto; }
                .buttons div { display: flex; align-items: center; justify-content: center; width: 75px; height: 23px; ${buttonFace} }
                .buttons .default { border-color: #000; box-shadow: inset 1px 1px #fff, inset -1px -1px #404040, inset -2px -2px #808080; }
            </style>
            <div class="title"><slot name="title"></slot><caption-button name="close"></caption-button></div>
            <div class="body">
                <div class="device"><ui-icon name="plug"></ui-icon><div><slot name="device"></slot></div></div>
                <slot name="message"></slot>
                <div class="buttons">
                    <div class="default"><fit-text width="15">OK</fit-text></div>
                    <div><fit-text width="34">Cancel</fit-text></div>
                </div>
            </div>
        `;
    }
}

class TrayBalloon extends HTMLElement {
    constructor() {
        super();
        this.attachShadow({ mode: 'open' }).innerHTML = `
            <style>
                :host { position: absolute; z-index: 2; left: 763px; top: 647px; width: 383px; height: 60px; }
                .shape { position: absolute; left: 0; top: 0; }
                .content { position: relative; display: flex; gap: 4px; padding: 7px 11px 0 12px; }
                .text { flex: 1; padding-top: 1px; }
                .head { font-weight: 700; margin-bottom: 1px; }
                .buttons { display: flex; }
                .buttons ui-icon { background: #d4d0c8; box-shadow: inset -1px -1px #888, inset 1px 1px #eee; height: 14px; }
            </style>
            <svg class="shape" width="383" height="60">
                <path d="M8 .5h366a8 8 0 0 1 8 8v27a8 8 0 0 1-8 8h-6v15l-15-15H8a8 8 0 0 1-7.500-8v-27A8 8 0 0 1 8 .5z" fill="#ffffe1" stroke="#000" stroke-width="1.200"/>
            </svg>
            <div class="content">
                <ui-icon name="failed"></ui-icon>
                <div class="text"><div class="head"><slot name="title"></slot></div><slot></slot></div>
                <div class="buttons"><ui-icon name="pin"></ui-icon><ui-icon name="cross"></ui-icon></div>
            </div>
        `;
    }
}

class TaskBar extends HTMLElement {
    constructor() {
        super();
        this.attachShadow({ mode: 'open' }).innerHTML = `
            <style>
                :host { position: relative; flex: none; box-sizing: border-box; display: flex; align-items: center; height: 28px; padding: 3px 2px 1px; background: #d4d0c8; box-shadow: inset 0 1px #d4d0c8, inset 0 2px #fff; }
                .start { display: flex; align-items: center; width: 52px; height: 22px; padding-left: 1px; font-weight: 700; ${buttonFace} }
                .quick { display: flex; gap: 18px; margin: 0 10px 0 17px; }
                .active { display: flex; align-items: center; justify-content: center; box-sizing: border-box; width: 32px; height: 22px; background: #f6f4f2; border: 1px solid; border-color: #404040 #fff #fff #404040; box-shadow: inset 1px 1px #808080; }
                .tray { box-sizing: border-box; display: flex; align-items: center; width: 162px; height: 22px; margin-left: auto; padding-left: 6px; border: 1px solid; border-color: #808080 #fff #fff #808080; }
                .tray > :nth-child(2) { margin-left: 14px; }
                .tray > :nth-child(3) { margin: 0 16px 0 8px; }
                .tray > :nth-child(5) { margin-left: 10px; }
            </style>
            <div class="start"><ui-icon name="flag"></ui-icon><fit-text width="29">Start</fit-text></div>
            <div class="quick">
                <ui-icon name="ie"></ui-icon><ui-icon name="explorer"></ui-icon><ui-icon name="player"></ui-icon><ui-icon name="chrome" size="16"></ui-icon><ui-icon name="edge"></ui-icon>
            </div>
            <div class="active"><ui-icon name="mmc"></ui-icon></div>
            <div class="tray">
                <ui-icon name="traydev"></ui-icon><ui-icon name="volume"></ui-icon><ui-icon name="traynet"></ui-icon><fit-text width="40">4:33 PM</fit-text><ui-icon name="showdesk"></ui-icon>
            </div>
        `;
    }
}

class WaterMark extends HTMLElement {
    constructor() {
        super();
        this.attachShadow({ mode: 'open' }).innerHTML = `
            <style>
                :host { position: absolute; z-index: 3; left: 1036px; top: 600px; opacity: .5; }
                svg { display: block; overflow: visible; }
                text { font: 51px "Liberation Sans Narrow", "Liberation Sans", sans-serif; fill: #c8d8ea; stroke: #c8d8ea; stroke-width: 1.2px; }
            </style>
            <svg width="210" height="80">
                <text x="5" y="59" textLength="62" lengthAdjust="spacingAndGlyphs">ANY</text>
                <text x="133" y="59" textLength="62" lengthAdjust="spacingAndGlyphs">RUN</text>
                <path d="M75 56V23q0-4 5-5M86 53V13l41 22M86 26l29 16-13 7M127 43l-26 15" fill="none" stroke="#c8d8ea" stroke-width="3.200" stroke-linejoin="round" stroke-linecap="round"/>
            </svg>
        `;
    }
}

customElements.define('desktop-screen', DesktopScreen);
customElements.define('desktop-icon', DesktopIcon);
customElements.define('device-manager', DeviceManager);
customElements.define('tree-row', TreeRow);
customElements.define('confirm-dialog', ConfirmDialog);
customElements.define('caption-button', CaptionButton);
customElements.define('tray-balloon', TrayBalloon);
customElements.define('task-bar', TaskBar);
customElements.define('water-mark', WaterMark);
customElements.define('ui-icon', UiIcon);
// last, so that every label is laid out when it is measured
customElements.define('fit-text', FitText);
</script>
</body>
</html>
